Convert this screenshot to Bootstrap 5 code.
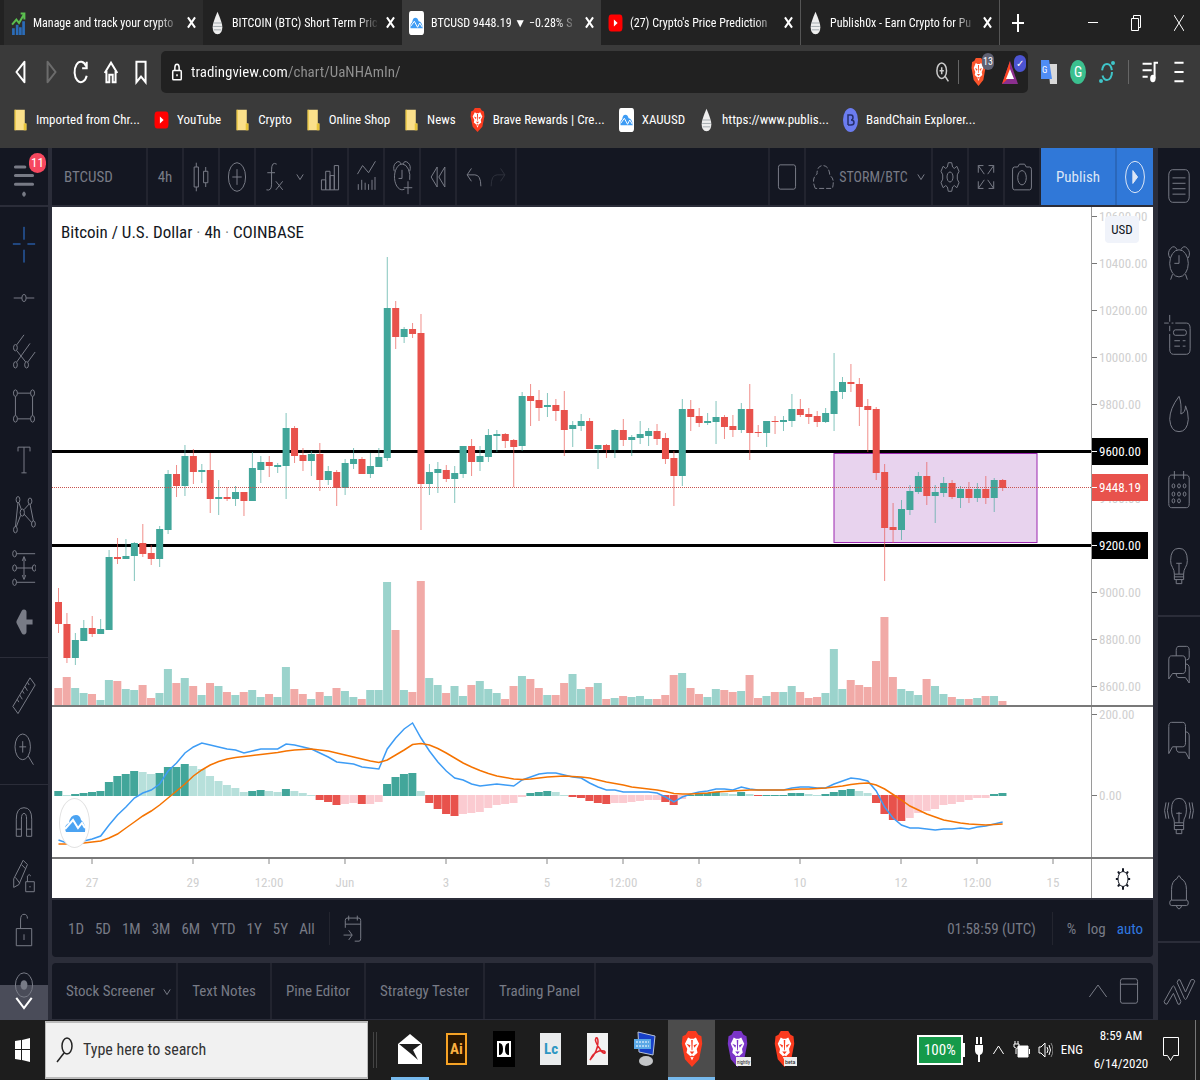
<!DOCTYPE html>
<html lang="en">

<head>
    <meta charset="UTF-8">
    <title>BTCUSD 9448.19 ▼ −0.28% STORM/BTC</title>
    <meta name="viewport" content="width=device-width, initial-scale=1">

    <!-- Bootstrap CSS -->
    <link href="https://cdn.jsdelivr.net/npm/bootstrap@5.3.3/dist/css/bootstrap.min.css" rel="stylesheet">

    <style>
        :root {
            --panel: #141722;
            --gap: #2b2d39;
            --dim: #787b86;
            --chrome: #3a3a3a;
            --ui: "Roboto Condensed", "Liberation Sans Narrow", "Liberation Sans", sans-serif;
        }

        body {
            font-family: var(--ui);
            font-size: 15px;
            line-height: 20px;
            background: var(--gap);
            color: #fff;
            overflow-x: hidden;
        }

        button, input { font-family: var(--ui); }
        button { background: none; border: 0; padding: 0; color: inherit; white-space: nowrap; }
        a { color: inherit; text-decoration: none; white-space: nowrap; }
        svg { display: block; flex: none; }
        symbol * { vector-effect: non-scaling-stroke; }

        /* icons */
        .ic { width: 24px; height: 40px; fill: none; stroke: currentColor; stroke-width: 1; }
        .ic-fav { width: 15px; height: 24px; }
        .ic-nav { width: 16px; height: 26px; stroke-width: 2; }
        .ic-sm { width: 10px; height: 12px; }
        .ic-x { width: 9px; height: 13px; stroke-width: 2; }
        .ic-task { width: 22px; height: 36px; }
        .flip { transform: scaleX(-1); }

        /* browser window */
        .tabstrip { height: 45px; background: #222; padding-left: 4px; font-size: 12px; }
        .tab-item { flex: 0 1 199px; min-width: 0; padding: 0 7px; gap: 7px; }
        .tab-item.first { background: #2c2c2c; }
        .tab-item.active { background: var(--chrome); }
        .tab-item.ruled { border-left: 1px solid #555; }
        .tab-item.new-tab { flex-basis: 36px; padding: 0; }
        .tab-name { flex: 1; min-width: 0; overflow: hidden; text-align: left; -webkit-mask-image: linear-gradient(90deg, #000 85%, transparent); }
        .win-btn { width: 43px; }
        .toolbar-row { background: var(--chrome); padding: 6px 13px; }
        .nav-group { gap: 14px; padding-right: 12px; }
        .address { background: #212121; border-radius: 5px; height: 42px; padding: 0 6px 0 10px; }
        .address input {
            font-size: 15px; background: linear-gradient(90deg, #fff 98px, #929292 98px);
            -webkit-background-clip: text; background-clip: text; -webkit-text-fill-color: transparent;
            border: 0; outline: 0; padding: 0; color: #fff;
        }
        .ext-group { gap: 13px; padding-left: 13px; }
        .rule { width: 1px; height: 24px; background: #666; }
        .bookmarks { background: var(--chrome); height: 49px; padding: 4px 13px 12px; gap: 14px; font-size: 13px; }
        .count { top: -5px; right: -8px; font-size: 10px; line-height: 17px; width: 12px; border-radius: 8px; text-align: center; background: #5f6173; }
        .count.ok { background: #4c54d2; }

        /* trading view */
        .workspace { flex: 1; color: var(--dim); }
        .left-rail { width: 48px; background: var(--panel); overflow: hidden; }
        .left-rail button { height: 54px; }
        .left-rail .menu-btn { height: 57px; border-bottom: 2px solid var(--gap); box-sizing: content-box; }
        .rail-group { padding: 10px 0 8px; border-bottom: 1px solid var(--gap); }
        .rail-group.last { border: 0; padding-bottom: 0; }
        .left-rail .cross-btn { color: #2f78dc; }
        .left-rail .scroll-more { bottom: 0; height: 35px; background: #4a4c59; color: #fff; }
        .eye-icon { bottom: 18px; height: 34px; }
        .alert-count { top: 5px; left: 29px; width: 17px; height: 20px; line-height: 20px; border-radius: 10px; background: #f7485f; color: #fff; font-size: 13px; text-align: center; }
        .right-rail { width: 42px; background: var(--panel); }
        .right-rail button { height: 76px; }
        .right-rail .ic { height: 38px; width: 26px; }
        .right-rail .last-btn { flex: 1; height: auto; padding-top: 20px; }
        .side-group { border-bottom: 2px solid var(--gap); padding-bottom: 11px; }
        .side-group + .side-group { padding-top: 9px; }
        .main-col { padding: 0 5px 0 4px; min-width: 0; }
        .chart-bar { height: 57px; background: var(--panel); margin-bottom: 2px; }
        .chart-bar > button { border-right: 2px solid #22242f; width: 36px; display: flex; align-items: center; justify-content: center; }
        .chart-bar > .first-right { border-left: 2px solid #22242f; width: 38px; }
        .chart-bar > .w-symbol { width: 96px; justify-content: start; padding-left: 12px; }
        .chart-bar > .w-wide { width: 57px; }
        .chart-bar > .w-layout { width: 127px; font-size: 14px; }
        .chart-bar > .w-undo { width: 60px; }
        .chart-bar > .publish { background: #3078d8; color: #dce6f6; width: 76px; border-color: #2a67ba; }
        .chart-bar > .publish-go { background: #3078d8; color: #dce6f6; border: 0; }

        .chart-area { flex: 1; background: #fff; color: #131722; }
        .chart-row { display: grid; grid-template-columns: 1fr 62px; }
        .chart-row > svg, .chart-row > div > svg { width: 100%; height: 100%; position: relative; }
        .pane-price { height: 498px; flex: 498 1 auto; }
        .pane-macd { height: 152px; flex: 152 1 auto; border-top: 2px solid #787878; }
        .pane-time { height: 41px; border-top: 2px solid #787878; }
        .scale { border-left: 1px solid #9a9a9a; overflow: hidden; }
        .scale text, .time-scale text { font-size: 13px; fill: #d0d0d0; }
        .time-scale text { text-anchor: middle; }
        .scale .tag-text { fill: #fff; }
        .scale .ic { width: 20px; height: 30px; }
        .legend-title { left: 9px; top: 12px; font-size: 17px; line-height: 26px; white-space: nowrap; }
        .currency { right: 14px; top: 9px; width: 34px; line-height: 27px; background: #f0f3fa; border-radius: 4px; font-size: 13px; }
        .tv-logo { left: 7px; bottom: 9px; width: 31px; height: 50px; border-radius: 50%; border: 1px solid #e2e2e2; background: #fff; }

        .range-bar { height: 57px; margin-top: 2px; margin-bottom: 6px; background: var(--panel); border-radius: 0 0 4px 4px; padding: 0 10px 0 16px; gap: 11px; }
        .range-bar .rule { height: 33px; background: #23252f; margin: 0 3px; }
        .range-bar .ic { height: 34px; margin-left: -3px; }
        .range-bar .utc-btn { margin-right: 2px; }
        .range-bar .auto-btn { color: #3079e0; }
        .panel-tabs { height: 56px; margin-bottom: 1px; background: var(--panel); border-radius: 4px 4px 0 0; }
        .panel-tabs > button { padding: 0 14px; border-right: 2px solid #22242f; }
        .panel-tabs .tall { height: 38px; }
        .panel-tabs .wide { width: 22px; height: 24px; }

        /* taskbar */
        .taskbar { height: 60px; background: #1d1d1d; font-size: 13px; }
        .start-btn { width: 45px; }
        .search-box { width: 323px; height: 58px; background: #f1f1f1; border: 1px solid #bbb; border-width: 2px 1px; padding-left: 10px; gap: 9px; }
        .search-box input { background: none; border: 0; outline: 0; font-size: 16px; padding: 0; color: #222; min-width: 0; }
        .search-box input::placeholder { color: #333; opacity: 1; }
        .task-btn { width: 47px; height: 60px; border-bottom: 3px solid transparent; }
        .task-btn.open { background: linear-gradient(#76b9ed, #76b9ed) center 57px / 38px 3px no-repeat; }
        .task-btn.current { background: #4c4c4c; border-bottom-color: #76b9ed; }
        .battery { background: #159a4a; border: 2px solid #fff; width: 46px; line-height: 26px; font-size: 15px; text-align: center; }
        .tray { gap: 8px; }
        .tray .ic { width: 13px; height: 16px; }
        .clock { line-height: 28px; width: 60px; text-align: center; }
        .tray-end { width: 5px; border-left: 1px solid #777; height: 60px; }
    </style>
</head>

<body class="d-flex flex-column min-vh-100 m-0">

    <!-- Icon sprite -->
    <svg width="0" height="0" class="position-absolute" aria-hidden="true">
        <symbol id="logo" viewBox="0 0 28 28" preserveAspectRatio="none"><rect width="28" height="28" rx="4" fill="#fff" stroke="none"/><path d="M3 20q-2-4 3-7 1-5 6-5 4 0 6 4 6 0 8 8z" fill="#3e9cf4" stroke="none"/><path d="M3 18l7-6 6 7 4-5 5 5" stroke="#fff" stroke-width="1" fill="none"/></symbol>
        <symbol id="drop" viewBox="0 0 28 28" preserveAspectRatio="none"><path d="M14 1q9 13 9 18 0 8-9 8t-9-8q0-5 9-18z" fill="#eee" stroke="none"/><path d="M7 14h14M6 18h16M7 22h14" stroke="#a4abb0" fill="none"/></symbol>
        <symbol id="tube" viewBox="0 0 28 28" preserveAspectRatio="none"><rect x="1" y="4" width="26" height="20" rx="5" fill="#f00" stroke="none"/><path d="M11 10l7 4-7 4z" fill="#fff" stroke="none"/></symbol>
        <symbol id="folder" viewBox="0 0 28 28" preserveAspectRatio="none"><path d="M3 2h19v16h3v8H3z" fill="#fbe08a" stroke="none"/><path d="M3 2h2v24H3zM20 26v-8l5 0v8z" fill="#e6c338" stroke="none"/></symbol>
        <symbol id="lion" viewBox="0 0 28 28" preserveAspectRatio="none"><path d="M9 0h10l3 3 4 1 1 6-4 12-9 6-9-6L1 10 2 4l4-1z" stroke="none"/><path d="M9 5l3 1h4l3-1 4 5-3 4 1 3-4 2-3 4-3-4-4-2 1-3-3-4z" fill="#fff" stroke="none"/><path d="M7 10l5 1-1 2zM21 10l-5 1 1 2zM13 7h2l-.500 8h-1zM11 16h6l-3 2zM10 20l4-1 4 1-4 .500z" stroke="none"/></symbol>
        <symbol id="growth" viewBox="0 0 28 28" preserveAspectRatio="none"><path d="M2 20h5v8H2zM9 16h5v12H9zM15 19h5v9h-5zM21 12h5v16h-5z" fill="#2b6cb8" stroke="none"/><path d="M2 16l8-6 5 4L24 4M18 3h7v7" stroke="#5bbf4f" stroke-width="2" fill="none"/></symbol>
        <symbol id="close" viewBox="0 0 28 28" preserveAspectRatio="none"><path d="M3 3l22 22M25 3L3 25"/></symbol>
        <symbol id="chev" viewBox="0 0 28 28" preserveAspectRatio="none"><path d="M5 8l9 12 9-12"/></symbol>
        <symbol id="chevup" viewBox="0 0 28 28" preserveAspectRatio="none"><path d="M3 21L14 7l11 14"/></symbol>
        <symbol id="back" viewBox="0 0 28 28" preserveAspectRatio="none"><path d="M20 3v22L6 14z" stroke-linejoin="round"/></symbol>
        <symbol id="reload" viewBox="0 0 28 28" preserveAspectRatio="none"><path d="M23 8A11 11 0 1 0 24 18M24 3v7h-8"/></symbol>
        <symbol id="home" viewBox="0 0 28 28" preserveAspectRatio="none"><path d="M3 15L14 4l11 11M6 13v12h5v-8h6v8h5V13"/></symbol>
        <symbol id="mark" viewBox="0 0 28 28" preserveAspectRatio="none"><path d="M6 3h16v22l-8-6-8 6z"/></symbol>
        <symbol id="lock" viewBox="0 0 28 28" preserveAspectRatio="none"><rect x="4" y="12" width="20" height="13" rx="2"/><path d="M9 12V8q0-5 5-5t5 5v4M14 17v3"/></symbol>
        <symbol id="zoomin" viewBox="0 0 28 28" preserveAspectRatio="none"><circle cx="12.500" cy="12.500" r="9"/><path d="M8.500 12.500h8M12.500 8.500v8M19 19l6 6"/></symbol>
        <symbol id="music" viewBox="0 0 28 28" preserveAspectRatio="none"><path d="M1 5h16M1 12h16M1 19h9M22 21V4h6"/><ellipse cx="19" cy="21" rx="3" ry="3" fill="currentColor"/></symbol>
        <symbol id="lines" viewBox="0 0 28 28" preserveAspectRatio="none"><path d="M6 4h16M6 14h16M6 24h16"/></symbol>

        <symbol id="candles" viewBox="0 0 28 28" preserveAspectRatio="none"><path d="M6 7h5v14H6zM8.500 4v3M8.500 21v3M17 10h5v8h-5zM19.500 7v3M19.500 18v3"/></symbol>
        <symbol id="plusring" viewBox="0 0 28 28" preserveAspectRatio="none"><circle cx="14" cy="14" r="10"/><path d="M14 8.500v11M8.500 14h11"/></symbol>
        <symbol id="fx" viewBox="0 0 28 28" preserveAspectRatio="none"><path d="M16 5q-6-2-6 4v10q0 5-6 4M5 11h9M15 17l8 6M23 17l-8 6"/></symbol>
        <symbol id="bars" viewBox="0 0 28 28" preserveAspectRatio="none"><path d="M4 16h5v7H4zM9 10h5v13H9zM14 13h5v10h-5zM19 6h5v17h-5z"/></symbol>
        <symbol id="indic" viewBox="0 0 28 28" preserveAspectRatio="none"><path d="M4 12l6-6 7 5 8-8M5 23v-4M9 23v-7M13 23v-5M17 23v-4M21 23v-7M24.500 23V14"/></symbol>
        <symbol id="alarm" viewBox="0 0 28 28" preserveAspectRatio="none"><circle cx="14" cy="15" r="10"/><path d="M4 11q-3-4 1-7t7 1M24 11q3-4-1-7t-7 1M14 9v6H9M7 23l-2 4M21 23l2 4"/></symbol>
        <symbol id="alarmadd" viewBox="0 0 28 28" preserveAspectRatio="none"><path d="M17 22.500A9 9 0 1 1 23 16M5 10q-2-4 2-6t6 1M23 10q2-4-2-6t-6 1M14 9v6h-4M21 17v9M16 21.500h10"/></symbol>
        <symbol id="rewind" viewBox="0 0 28 28" preserveAspectRatio="none"><path d="M13 7v14L6 14zM22 7v14L15 14z"/></symbol>
        <symbol id="undo" viewBox="0 0 28 28" preserveAspectRatio="none"><path d="M11 8l-5 4.500 5 4.500M6 12.500h9q7 0 7 8"/></symbol>
        <symbol id="square" viewBox="0 0 28 28" preserveAspectRatio="none"><rect x="4" y="5.500" width="20" height="17" rx="2"/></symbol>
        <symbol id="cloud" viewBox="0 0 28 28" preserveAspectRatio="none"><path d="M5 22q-5-7 2-10 0-6 7-6t8 7q6 2 3 9z" stroke-dasharray="5 2"/></symbol>
        <symbol id="gear" viewBox="0 0 28 28" preserveAspectRatio="none"><path d="M12 4h4l1 3 2 1 3-1.500 2.500 3.500-2 2.500v3l2 2.500-2.500 3.500-3-1.500-2 1-1 3h-4l-1-3-2-1L6 21.500 3.500 18l2-2.500v-3l-2-2.500L6 6.500 9 8l2-1z"/><circle cx="14" cy="14" r="3.500"/></symbol>
        <symbol id="expand" viewBox="0 0 28 28" preserveAspectRatio="none"><path d="M5 11V6h6M5 6l7 6M23 11V6h-6M23 6l-7 6M5 17v5h6M5 22l7-6M23 17v5h-6M23 22l-7-6"/></symbol>
        <symbol id="camera" viewBox="0 0 28 28" preserveAspectRatio="none"><path d="M3 9q0-2 2-2h4l2-2h6l2 2h4q2 0 2 2v12q0 2-2 2H5q-2 0-2-2z"/><circle cx="14" cy="14.500" r="5"/></symbol>
        <symbol id="play" viewBox="0 0 28 28" preserveAspectRatio="none"><circle cx="14" cy="14" r="11"/><path d="M11.500 9.500v9L17 14z" fill="currentColor"/></symbol>

        <symbol id="menu" viewBox="0 0 28 28" preserveAspectRatio="none"><path d="M4 7h11M4 13h20M4 19h20" stroke-width="3" stroke-linecap="round"/><circle cx="14" cy="26" r="1.500" fill="currentColor"/></symbol>
        <symbol id="cross" viewBox="0 0 28 28" preserveAspectRatio="none"><path d="M14 2v9M14 18v9M1 14h9M18 14h9"/></symbol>
        <symbol id="trend" viewBox="0 0 28 28" preserveAspectRatio="none"><circle cx="14" cy="14" r="2.500"/><path d="M2 14h9.500M16.500 14H26"/></symbol>
        <symbol id="fork" viewBox="0 0 28 28" preserveAspectRatio="none"><circle cx="4" cy="11" r="2.200"/><circle cx="4" cy="23" r="2.200"/><circle cx="17" cy="23" r="2.200"/><path d="M5.500 9L14 2M5.500 21L21 8M18.500 21L27 14M5.500 13L16 21"/></symbol>
        <symbol id="rectool" viewBox="0 0 28 28" preserveAspectRatio="none"><circle cx="4" cy="5" r="2.300"/><circle cx="24" cy="5" r="2.300"/><circle cx="4" cy="23" r="2.300"/><circle cx="24" cy="23" r="2.300"/><path d="M6.500 5h15M6.500 23h15M4 7.500v13M24 7.500v13"/></symbol>
        <symbol id="texttool" viewBox="0 0 28 28" preserveAspectRatio="none"><path d="M7 8V5h14v3M14 5v18M11 23h6"/></symbol>
        <symbol id="pattern" viewBox="0 0 28 28" preserveAspectRatio="none"><circle cx="7" cy="4" r="2.200"/><circle cx="21" cy="5" r="2.200"/><circle cx="12" cy="13" r="2.500"/><circle cx="4" cy="25" r="2.200"/><circle cx="25" cy="21" r="2.200"/><path d="M7 6L4 23M8 6l3 5M21 7l4 12M20 7l-6 4M10 15l-5 8M14 14l9 6"/></symbol>
        <symbol id="measure" viewBox="0 0 28 28" preserveAspectRatio="none"><circle cx="3" cy="4" r="2.200"/><circle cx="3" cy="14" r="2.200"/><circle cx="26" cy="14" r="2.200"/><circle cx="3" cy="24" r="2.200"/><path d="M5 4h22M5 24h22M5 14h19M14 7v13M12 9l2-3 2 3M12 19l2 3 2-3"/></symbol>
        <symbol id="arrow" viewBox="0 0 28 28" preserveAspectRatio="none"><path d="M14 7L8 14l6 7zM8 14h16" stroke-width="5" stroke-linejoin="round"/></symbol>
        <symbol id="ruler" viewBox="0 0 28 28" preserveAspectRatio="none"><path d="M21 2l6 5L7 27l-6-5zM18 5l2 2M15 8l3 3M12 11l2 2M9 14l3 3M6 17l2 2"/></symbol>
        <symbol id="magnet" viewBox="0 0 28 28" preserveAspectRatio="none"><path d="M5 24V12q0-8 9-8t9 8v12h-6V12q0-4-3-4t-3 4v12zM5 19h6M17 19h6"/></symbol>
        <symbol id="pencil" viewBox="0 0 28 28" preserveAspectRatio="none"><path d="M2 16L13 3l5 3L8 20l-6 2zM4 15l5 4M11 6l5 3M16 18h10v7H16zM18 18v-4q2-2 4 0M21 21v1"/></symbol>
        <symbol id="unlock" viewBox="0 0 28 28" preserveAspectRatio="none"><path d="M5 13h18v12H5zM10 13V7q0-4 4-4t4 3M14 17v4"/></symbol>
        <symbol id="eye" viewBox="0 0 28 28" preserveAspectRatio="none"><circle cx="14" cy="14" r="10"/><circle cx="14" cy="14" r="4" fill="currentColor" stroke="none"/></symbol>

        <symbol id="list" viewBox="0 0 28 28" preserveAspectRatio="none"><rect x="3" y="2" width="22" height="24" rx="4"/><path d="M7 8h14M7 12h14M7 16h14M7 20h14"/></symbol>
        <symbol id="datawin" viewBox="0 0 28 28" preserveAspectRatio="none" overflow="visible"><path d="M10 3h12q4 0 4 4v15q0 4-4 4H8q-4 0-4-4V11M4-3v5M4 5v4M-2 3h5M6 3h2"/><rect x="8" y="8" width="14" height="4" rx="2"/><path d="M9 16h6M18 16h3M9 20h6M18 20h3"/></symbol>
        <symbol id="flame" viewBox="0 0 28 28" preserveAspectRatio="none"><path d="M14 1Q4 10 4 18q1 9 10 9t10-9q0-6-3-10 0 5-5 6 1-8-2-13z"/></symbol>
        <symbol id="calendar" viewBox="0 0 28 28" preserveAspectRatio="none"><rect x="3" y="3" width="22" height="24" rx="3"/><path d="M9 0v6M19 0v6"/><g><circle cx="8" cy="11" r="1.500"/><circle cx="14" cy="11" r="1.500"/><circle cx="20" cy="11" r="1.500"/><circle cx="8" cy="17" r="1.500"/><circle cx="14" cy="17" r="1.500"/><circle cx="20" cy="17" r="1.500"/><circle cx="8" cy="22" r="1.500"/><circle cx="14" cy="22" r="1.500"/></g></symbol>
        <symbol id="bulb" viewBox="0 0 28 28" preserveAspectRatio="none"><path d="M9 20q0-3-2-5-2-2-2-5 0-9 9-9t9 9q0 3-2 5-2 2-2 5zM14 20v-8M11 12h6M9 20v4h10v-4M11 24v3h6v-3M9 22h10"/></symbol>
        <symbol id="stream" viewBox="0 0 28 28" preserveAspectRatio="none" overflow="visible"><path d="M9 19q0-3-2-5-1-2-1-5 0-8 8-8t8 8q0 3-1 5-2 2-2 5zM14 19v-8M11 12h6M9 19v5h10v-5M11 24v3h6v-3M9 21h10M3 4q-3 6 0 12M0 4q-3 6 0 12M25 4q3 6 0 12M28 4q3 6 0 12"/></symbol>
        <symbol id="chats" viewBox="0 0 28 28" preserveAspectRatio="none"><path d="M3 25V11q0-3 3-3h12q3 0 3 3v7q0 3-3 3H7zM11 8V4q0-3 3-3h8q3 0 3 3v5q0 2-3 2M21 14q4 0 4 3v11l-4-4h-7q-3 0-3-3"/></symbol>
        <symbol id="chat" viewBox="0 0 28 28" preserveAspectRatio="none"><path d="M3 24V4q0-3 3-3h12q3 0 3 3v12q0 3-3 3H7zM21 8q4 0 4 3v17l-4-5h-7q-3 0-3-4"/></symbol>
        <symbol id="bell" viewBox="0 0 28 28" preserveAspectRatio="none"><path d="M6 20v-8q0-6 6-8 2-4 4 0 6 2 6 8v8M11 24q3 5 6 0"/><rect x="4" y="20" width="20" height="4" rx="2"/></symbol>
        <symbol id="zigzag" viewBox="0 0 28 28" preserveAspectRatio="none" overflow="visible"><path d="M-2 21L7 10q1-1 2 0l7 11q-1 3-3 2L8 15l-7 8q-3 0-3-2zM12 7q1-3 3-2l6 9 6-9q3-1 4 1l-9 13q-1 1-2 0z"/></symbol>
        <symbol id="goto" viewBox="0 0 28 28" preserveAspectRatio="none"><path d="M5 13V7q0-2 2-2h14q2 0 2 2v15q0 2-2 2h-5M5 10h18M9 3v4M19 3v4M3 19h10M9 15l4 4-4 4"/></symbol>
        <symbol id="window" viewBox="0 0 28 28" preserveAspectRatio="none"><rect x="4" y="5" width="20" height="18" rx="2"/><path d="M4 9h20"/></symbol>
        <symbol id="sun" viewBox="0 0 28 28" preserveAspectRatio="none"><circle cx="14" cy="14" r="7"/><path d="M14 4v3M14 21v3M4 14h3M21 14h3M7 7l2 2M19 19l2 2M7 21l2-2M19 9l2-2" stroke-width="2"/></symbol>
    </svg>

    <!-- Browser tabs -->
    <header>
        <div class="tabstrip d-flex align-items-stretch">
            <button class="tab-item first d-flex align-items-center"><svg class="ic-fav"><use href="#growth"/></svg><span class="tab-name">Manage and track your crypto</span><svg class="ic ic-x"><use href="#close"/></svg></button>
            <button class="tab-item d-flex align-items-center"><svg class="ic-fav"><use href="#drop"/></svg><span class="tab-name">BITCOIN (BTC) Short Term Pric</span><svg class="ic ic-x"><use href="#close"/></svg></button>
            <button class="tab-item active d-flex align-items-center"><svg class="ic-fav"><use href="#logo"/></svg><span class="tab-name">BTCUSD 9448.19 ▼ −0.28% S</span><svg class="ic ic-x"><use href="#close"/></svg></button>
            <button class="tab-item d-flex align-items-center"><svg class="ic-fav"><use href="#tube"/></svg><span class="tab-name">(27) Crypto's Price Prediction</span><svg class="ic ic-x"><use href="#close"/></svg></button>
            <button class="tab-item ruled d-flex align-items-center"><svg class="ic-fav"><use href="#drop"/></svg><span class="tab-name">Publish0x - Earn Crypto for Pu</span><svg class="ic ic-x"><use href="#close"/></svg></button>
            <button class="tab-item ruled new-tab" aria-label="New tab"><svg class="mx-auto" width="12" height="18" stroke="#fff" stroke-width="2"><path d="M6 0v18M0 9h12"/></svg></button>
            <div class="ms-auto d-flex">
                <button class="win-btn" aria-label="Minimize"><svg class="mx-auto" width="10" height="16" stroke="#fff"><path d="M0 7.500h10"/></svg></button>
                <button class="win-btn" aria-label="Restore"><svg class="mx-auto" width="10" height="16" stroke="#fff" fill="none"><path d="M.5 3.500h7v12h-7zM2.500 3.500v-3h7v12h-2"/></svg></button>
                <button class="win-btn" aria-label="Close"><svg class="mx-auto" width="10" height="16" stroke="#fff"><path d="M0 0l10 16M10 0L0 16"/></svg></button>
            </div>
        </div>

        <!-- Address bar -->
        <div class="toolbar-row d-flex align-items-center">
            <div class="nav-group d-flex">
                <button aria-label="Back"><svg class="ic ic-nav"><use href="#back"/></svg></button>
                <button aria-label="Forward" class="opacity-25"><svg class="ic ic-nav flip"><use href="#back"/></svg></button>
                <button aria-label="Reload"><svg class="ic ic-nav"><use href="#reload"/></svg></button>
                <button aria-label="Home"><svg class="ic ic-nav"><use href="#home"/></svg></button>
                <button aria-label="Bookmark"><svg class="ic ic-nav"><use href="#mark"/></svg></button>
            </div>
            <div class="address flex-grow-1 d-flex align-items-center gap-2">
                <svg width="12" height="20" fill="none" stroke="#fff" stroke-width="1.500"><use href="#lock"/></svg>
                <input class="flex-grow-1" type="text" aria-label="Address" value="tradingview.com/chart/UaNHAmIn/">
                <svg width="15" height="24" fill="none" stroke="#ccc" stroke-width="1.500"><use href="#zoomin"/></svg>
                <div class="rule"></div>
                <button class="position-relative ms-1" aria-label="Shields"><svg width="15" height="28" fill="#fb542b"><use href="#lion"/></svg><span class="count position-absolute">13</span></button>
                <button class="position-relative ms-2 me-1" aria-label="Rewards"><svg width="16" height="24"><path d="M8 1L0 24h16z" fill="#8b2f8f"/><path d="M8 1L0 24l8-7z" fill="#ff4724"/><path d="M8 9l-4 10h8z" fill="#fff"/></svg><span class="count ok position-absolute">✓</span></button>
            </div>
            <div class="ext-group d-flex align-items-center">
                <svg width="16" height="24"><path d="M7 4h9v20H9z" fill="#d8d8d8"/><path d="M0 0h8l3 19H0z" fill="#4f8df5"/><text x="1" y="13" font-size="9" fill="#fff">G</text></svg>
                <svg width="16" height="24"><ellipse cx="8" cy="12" rx="8" ry="12" fill="#3bc08f"/><text x="4" y="17" font-size="14" fill="#fff">G</text></svg>
                <svg width="16" height="24" fill="none" stroke="#3fc4c8" stroke-width="2"><ellipse cx="8" cy="12" rx="5" ry="8" stroke-dasharray="17 5"/><circle cx="14" cy="3" r="1"/><circle cx="2" cy="21" r="1"/></svg>
                <div class="rule"></div>
                <svg class="ic ic-nav"><use href="#music"/></svg>
                <svg class="ic ic-nav"><use href="#lines"/></svg>
            </div>
        </div>

        <!-- Bookmarks -->
        <nav class="bookmarks d-flex align-items-center">
            <a href="#" class="d-flex align-items-center gap-2"><svg class="ic-fav"><use href="#folder"/></svg>Imported from Chr...</a>
            <a href="#" class="d-flex align-items-center gap-2"><svg class="ic-fav"><use href="#tube"/></svg>YouTube</a>
            <a href="#" class="d-flex align-items-center gap-2"><svg class="ic-fav"><use href="#folder"/></svg>Crypto</a>
            <a href="#" class="d-flex align-items-center gap-2"><svg class="ic-fav"><use href="#folder"/></svg>Online Shop</a>
            <a href="#" class="d-flex align-items-center gap-2"><svg class="ic-fav"><use href="#folder"/></svg>News</a>
            <a href="#" class="d-flex align-items-center gap-2"><svg class="ic-fav" fill="#fb3b1e"><use href="#lion"/></svg>Brave Rewards | Cre...</a>
            <a href="#" class="d-flex align-items-center gap-2"><svg class="ic-fav"><use href="#logo"/></svg>XAUUSD</a>
            <a href="#" class="d-flex align-items-center gap-2"><svg class="ic-fav"><use href="#drop"/></svg>https://www.publis...</a>
            <a href="#" class="d-flex align-items-center gap-2"><svg width="15" height="24"><ellipse cx="7.500" cy="12" rx="7.500" ry="12" fill="#6b7cf0"/><path d="M5 17V7h3q2 0 2 2.500T8 12q3 0 3 2.500T8 17H5" fill="none" stroke="#26306e" stroke-width="1.500"/></svg>BandChain Explorer...</a>
        </nav>
    </header>

    <main class="workspace d-flex">
        <!-- Drawing tools -->
        <aside class="left-rail position-relative d-flex flex-column flex-shrink-0">
            <button class="menu-btn d-flex justify-content-center align-items-center position-relative" aria-label="Menu"><svg class="ic"><use href="#menu"/></svg><span class="alert-count position-absolute">11</span></button>
            <div class="rail-group d-flex flex-column align-items-center">
                <button class="cross-btn" aria-label="Cross"><svg class="ic"><use href="#cross"/></svg></button>
                <button aria-label="Trend line"><svg class="ic"><use href="#trend"/></svg></button>
                <button aria-label="Pitchfork"><svg class="ic"><use href="#fork"/></svg></button>
                <button aria-label="Rectangle"><svg class="ic"><use href="#rectool"/></svg></button>
                <button aria-label="Text"><svg class="ic"><use href="#texttool"/></svg></button>
                <button aria-label="Pattern"><svg class="ic"><use href="#pattern"/></svg></button>
                <button aria-label="Position"><svg class="ic"><use href="#measure"/></svg></button>
                <button aria-label="Arrow"><svg class="ic"><use href="#arrow"/></svg></button>
            </div>
            <div class="rail-group d-flex flex-column align-items-center">
                <button aria-label="Measure"><svg class="ic"><use href="#ruler"/></svg></button>
                <button aria-label="Zoom in"><svg class="ic"><use href="#zoomin"/></svg></button>
            </div>
            <div class="rail-group last d-flex flex-column align-items-center">
                <button aria-label="Magnet"><svg class="ic"><use href="#magnet"/></svg></button>
                <button aria-label="Stay in drawing mode"><svg class="ic"><use href="#pencil"/></svg></button>
                <button aria-label="Lock"><svg class="ic"><use href="#unlock"/></svg></button>
            </div>
            <button class="scroll-more position-absolute w-100 d-flex justify-content-center align-items-center" aria-label="More tools"><svg width="24" height="24" fill="none" stroke="#fff" stroke-width="2"><use href="#chev"/></svg></button>
            <svg class="ic eye-icon position-absolute start-50 translate-middle-x"><use href="#eye"/></svg>
        </aside>

        <section class="main-col flex-grow-1 d-flex flex-column">
            <!-- Chart toolbar -->
            <div class="chart-bar d-flex">
                <button class="w-symbol">BTCUSD</button>
                <button>4h</button>
                <button aria-label="Candles"><svg class="ic"><use href="#candles"/></svg></button>
                <button aria-label="Compare"><svg class="ic"><use href="#plusring"/></svg></button>
                <button class="w-wide gap-2" aria-label="Indicators"><svg class="ic"><use href="#fx"/></svg><svg class="ic ic-sm"><use href="#chev"/></svg></button>
                <button aria-label="Financials"><svg class="ic"><use href="#bars"/></svg></button>
                <button aria-label="Templates"><svg class="ic"><use href="#indic"/></svg></button>
                <button aria-label="Alert"><svg class="ic"><use href="#alarmadd"/></svg></button>
                <button aria-label="Replay"><svg class="ic"><use href="#rewind"/></svg></button>
                <button class="w-undo" aria-label="Undo"><svg class="ic"><use href="#undo"/></svg><svg class="ic opacity-25 flip"><use href="#undo"/></svg></button>
                <button class="first-right ms-auto" aria-label="Layout"><svg class="ic"><use href="#square"/></svg></button>
                <button class="w-layout gap-1"><svg class="ic"><use href="#cloud"/></svg>STORM/BTC<svg class="ic ic-sm ms-1"><use href="#chev"/></svg></button>
                <button aria-label="Settings"><svg class="ic"><use href="#gear"/></svg></button>
                <button aria-label="Fullscreen"><svg class="ic"><use href="#expand"/></svg></button>
                <button aria-label="Snapshot"><svg class="ic"><use href="#camera"/></svg></button>
                <button class="publish">Publish</button>
                <button class="publish-go" aria-label="Start streaming"><svg class="ic"><use href="#play"/></svg></button>
            </div>

            <!-- Chart -->
            <div class="chart-area d-flex flex-column position-relative">
                <div class="chart-row pane-price">
                    <svg id="pricePane" viewBox="52 207 1039 498" preserveAspectRatio="none"></svg>
                    <div class="scale"><svg id="priceScale"></svg></div>
                </div>
                <div class="chart-row pane-macd position-relative">
                    <svg id="macdPane" viewBox="52 707 1039 150" preserveAspectRatio="none"></svg>
                    <div class="scale"><svg id="macdScale"></svg></div>
                    <a href="#" class="tv-logo position-absolute d-flex align-items-center justify-content-center" aria-label="TradingView"><svg width="22" height="22" viewBox="0 0 22 22"><path d="M2 20q-3-6 3-9 1-8 7-8 4 0 5 5 5 4 4 12z" fill="#4ba3f2"/><path d="M1 17l8-9 5 8 4-5 3 5" fill="none" stroke="#fff" stroke-width="2"/></svg></a>
                </div>
                <div class="chart-row pane-time">
                    <svg id="timeScale" class="time-scale"></svg>
                    <button class="scale d-flex align-items-center justify-content-center" aria-label="Chart settings"><svg class="ic"><use href="#sun"/></svg></button>
                </div>
                <div class="legend-title position-absolute">Bitcoin / U.S. Dollar <span class="text-black-50">·</span> 4h <span class="text-black-50">·</span> COINBASE</div>
                <button class="currency position-absolute">USD</button>
            </div>

            <!-- Date range -->
            <div class="range-bar d-flex align-items-center">
                <button>1D</button>
                <button>5D</button>
                <button>1M</button>
                <button>3M</button>
                <button>6M</button>
                <button>YTD</button>
                <button>1Y</button>
                <button>5Y</button>
                <button>All</button>
                <div class="rule"></div>
                <button aria-label="Go to date"><svg class="ic"><use href="#goto"/></svg></button>
                <button class="utc-btn ms-auto">01:58:59 (UTC)</button>
                <div class="rule"></div>
                <button>%</button>
                <button>log</button>
                <button class="auto-btn">auto</button>
            </div>

            <!-- Bottom panels -->
            <div class="panel-tabs d-flex">
                <button class="pe-1">Stock Screener <svg class="ic ic-sm d-inline-block ms-1"><use href="#chev"/></svg></button>
                <button>Text Notes</button>
                <button>Pine Editor</button>
                <button>Strategy Tester</button>
                <button>Trading Panel</button>
                <div class="ms-auto d-flex align-items-center gap-2 pe-2 me-1">
                    <svg class="ic wide"><use href="#chevup"/></svg>
                    <svg class="ic tall"><use href="#window"/></svg>
                </div>
            </div>
        </section>

        <!-- Widgets -->
        <aside class="right-rail d-flex flex-column flex-shrink-0">
            <div class="side-group d-flex flex-column align-items-center">
                <button aria-label="Watchlist"><svg class="ic"><use href="#list"/></svg></button>
                <button aria-label="Alerts"><svg class="ic"><use href="#alarm"/></svg></button>
                <button aria-label="Data window"><svg class="ic overflow-visible"><use href="#datawin"/></svg></button>
                <button aria-label="Hotlist"><svg class="ic"><use href="#flame"/></svg></button>
                <button aria-label="Calendar"><svg class="ic"><use href="#calendar"/></svg></button>
                <button aria-label="Ideas"><svg class="ic"><use href="#bulb"/></svg></button>
            </div>
            <div class="side-group d-flex flex-column align-items-center">
                <button aria-label="Public chats"><svg class="ic"><use href="#chats"/></svg></button>
                <button aria-label="Private chats"><svg class="ic"><use href="#chat"/></svg></button>
                <button aria-label="Ideas stream"><svg class="ic overflow-visible"><use href="#stream"/></svg></button>
                <button aria-label="Notifications"><svg class="ic"><use href="#bell"/></svg></button>
            </div>
            <button class="last-btn mx-auto" aria-label="Order panel"><svg class="ic overflow-visible"><use href="#zigzag"/></svg></button>
        </aside>
    </main>

    <!-- Windows taskbar -->
    <footer class="taskbar d-flex align-items-center">
        <button class="start-btn" aria-label="Start"><svg class="mx-auto" width="15" height="24" fill="#fff"><path d="M0 3l6-1v9H0zM7 2l8-2v11H7zM0 12h6v10l-6-1zM7 12h8v12l-8-2z"/></svg></button>
        <label class="search-box d-flex align-items-center">
            <svg width="18" height="26" fill="none" stroke="#222" stroke-width="1.500"><ellipse cx="11" cy="9" rx="5" ry="8"/><path d="M8 16L1 25"/></svg>
            <input type="text" placeholder="Type here to search" aria-label="Search">
        </label>
        <svg width="18" height="40" stroke="#444"><path d="M5.500 2v36M8.500 2v36"/></svg>
        <button class="task-btn open" aria-label="Mail"><svg class="mx-auto" width="24" height="30"><path d="M0 10L12 0l12 10v20H0z" fill="#fff"/><path d="M1 10h22l-8 6 5 10-8-7z" fill="#1d1d1d"/></svg></button>
        <button class="task-btn" aria-label="Illustrator"><svg class="mx-auto" width="21" height="32"><rect x="1" y="1" width="19" height="30" fill="#2a1600" stroke="#f7a325" stroke-width="2"/><text x="4" y="21" font-size="15" font-weight="700" fill="#fbb040">Ai</text></svg></button>
        <button class="task-btn" aria-label="Dolby"><svg class="mx-auto" width="22" height="36"><rect width="22" height="36"/><rect x="4" y="10" width="14" height="16" fill="#fff"/><path d="M6 12q4 0 4 6t-4 6zM16 12q-4 0-4 6t4 6z"/></svg></button>
        <button class="task-btn" aria-label="LiveCycle"><svg class="mx-auto" width="21" height="32"><rect width="21" height="32" fill="#eaeced"/><text x="4" y="21" font-size="15" font-weight="700" fill="#2e97c3">Lc</text></svg></button>
        <button class="task-btn" aria-label="Acrobat"><svg class="mx-auto" width="21" height="32"><rect width="21" height="32" fill="#f2f2f2"/><path d="M3 27q8-9 8-18 0-5-2-4-2 3 4 11 3 5 5 4 1-3-6-2-6 2-9 9z" fill="none" stroke="#e0262d" stroke-width="1.500"/></svg></button>
        <button class="task-btn" aria-label="Remote"><svg class="mx-auto" width="24" height="36"><path d="M5 1l17 4-2 19-14-3z" fill="#1740c8" stroke="#b8c4d8"/><path d="M1 8h17v10H1z" fill="#5aa8e6"/><path d="M3 11h13M3 15h13" stroke="#fff" stroke-dasharray="2 1"/><ellipse cx="13" cy="30" rx="7" ry="5" fill="#c4c6c8"/></svg></button>
        <button class="task-btn current" aria-label="Brave"><svg class="ic-task mx-auto" fill="#fb3b1e"><use href="#lion"/></svg></button>
        <button class="task-btn" aria-label="Brave Nightly"><svg class="mx-auto" width="24" height="36" fill="#7a35c8"><use href="#lion" width="21" height="36"/><rect x="9" y="26" width="15" height="9" fill="#eee"/><text x="10" y="33" font-size="5" fill="#222">nightly</text></svg></button>
        <button class="task-btn" aria-label="Brave Beta"><svg class="mx-auto" width="24" height="36" fill="#fb3b1e"><use href="#lion" width="21" height="36"/><rect x="10" y="26" width="13" height="9" fill="#eee"/><text x="11" y="33" font-size="6" fill="#222">beta</text></svg></button>
        <div class="tray ms-auto d-flex align-items-center">
            <div class="d-flex align-items-center"><span class="battery">100%</span><svg width="3" height="14"><path d="M0 0h2v14H0z" fill="#fff"/></svg></div>
            <svg width="10" height="26" fill="#fff"><path d="M1 8h8v5q0 4-3 5v7H4v-7q-3-1-3-5zM2 0h2v7H2zM6 0h2v7H6z"/></svg>
            <svg class="ic"><use href="#chevup"/></svg>
            <svg width="17" height="18" fill="none" stroke="#fff"><path d="M5 5h10v11H5z" fill="#fff"/><path d="M16.500 8v5M1 3h5v3q-2 3-5 0zM2 0v3M5 0v3M3 8v5"/></svg>
            <svg width="15" height="18" fill="none" stroke="#fff"><path d="M1 6h2l4-4v14l-4-4H1zM9 6q2 3 0 6M11 4q3 5 0 10" /><path d="M13 2q4 7 0 14" stroke="#888"/></svg>
            <button>ENG</button>
            <div class="clock">8:59 AM<br>6/14/2020</div>
            <svg class="ms-1" width="16" height="26" fill="none" stroke="#fff"><path d="M.5.500h15v18h-5l-3 5-3-5h-4z"/></svg>
            <div class="tray-end ms-2"></div>
        </div>
    </footer>

    <!-- Bootstrap JS -->
    <script src="https://cdn.jsdelivr.net/npm/bootstrap@5.3.3/dist/js/bootstrap.bundle.min.js"></script>

    <script>
        const UP = '#42a69a', DOWN = '#e8524c';
        const STEP = 8.43, X0 = 58.5;

        /* color, high, body top, body bottom, low */
        const candles = `r588,602,624,633 r613,624,658,663 g633,640,658,665 g620,628,641,641 r616,628,634,637 g619,629,634,634
            g550,557,630,630 r538,557,559,564 g539,556,559,559 g542,543,556,581 r524,543,554,557 r545,553,559,565
            g526,529,559,567 g470,474,530,534 r465,474,486,497 g445,456,486,496 r449,456,472,484 g464,470,472,483
            r453,470,499,513 g480,497,499,515 r487,497,499,501 g486,492,499,506 r492,492,501,516 g452,468,501,501
            g456,462,470,483 r456,462,466,477 g463,465,467,473 g413,428,466,499 r426,428,456,463 r448,455,461,471
            g451,454,461,476 r443,454,480,491 g466,471,480,485 r470,472,488,506 g459,463,488,495 g448,459,464,469
            r457,459,474,474 g453,466,474,478 g448,457,467,467 g257,308,458,461 r301,308,337,349 g327,329,337,343
            r323,329,334,338 r314,333,484,530 g464,472,484,495 g462,469,473,493 r465,470,479,482 g466,473,479,503
            g446,446,474,478 r439,446,462,476 g446,456,462,471 g429,435,457,462 g430,434,436,452 r433,434,441,448
            r439,440,447,487 g392,396,446,451 r384,396,401,426 r390,400,408,421 g393,405,407,417 r399,405,411,421
            r391,410,430,456 g421,425,429,447 g414,421,426,431 r418,421,449,449 g445,445,449,469 r444,445,450,458
            g429,430,450,458 r419,430,440,446 g435,437,440,456 g421,434,438,444 g428,431,436,446 r424,431,439,445
            r433,438,459,464 r451,458,476,506 g399,409,476,486 r400,409,417,431 r408,416,423,427 g413,421,423,425
            g401,417,422,444 r415,417,427,439 r415,426,430,437 g403,409,430,433 r384,409,433,460 r425,432,433,437
            g421,421,433,447 r416,421,422,434 g416,420,422,431 g394,409,421,427 r399,409,415,417 r408,414,417,424
            r411,416,422,427 g408,413,422,423 g353,391,414,431 g377,382,392,399 r364,382,384,392 r378,384,407,426
            r399,406,410,452 r407,409,473,480 r464,472,528,581 r503,527,530,543 g500,509,530,540 g485,491,510,515
            g472,476,492,494 r462,476,496,505 g485,492,496,523 g477,483,493,497 r480,483,497,499 g486,489,498,508
            r482,489,498,503 g483,489,498,502 r476,489,498,504 g478,480,498,512 r479,480,488,491`
            .split(/\s+/).map(c => [c[0], ...c.slice(1).split(',').map(Number)]);

        const volume = [17, 28, 17, 12, 11, 5, 25, 24, 16, 15, 20, 7, 12, 36, 22, 27, 19, 10, 22, 19, 13, 10, 13, 15, 8, 11, 8, 38, 16,
            11, 6, 13, 9, 17, 14, 8, 6, 15, 15, 123, 75, 15, 13, 124, 27, 20, 12, 19, 9, 20, 24, 16, 12, 6, 19, 29, 26, 17, 10, 10,
            22, 31, 16, 18, 22, 6, 7, 9, 8, 9, 6, 6, 10, 30, 32, 17, 11, 8, 16, 15, 13, 14, 30, 7, 9, 13, 13, 19, 13, 7, 8, 12, 56,
            16, 25, 20, 18, 44, 88, 28, 16, 14, 10, 26, 19, 11, 8, 6, 6, 7, 9, 9, 4];

        const histogram = [5, 1, 2, 3, 4, 5, 14, 20, 22, 25, 24, 22, 23, 29, 29, 32, 30, 27, 20, 15, 11, 8, 4, 5, 6, 5, 4, 7, 5, 3, 1,
            -5, -7, -10, -9, -8, -9, -9, -7, 12, 19, 22, 23, 5, -8, -14, -19, -21, -19, -18, -17, -13, -10, -9, -8, -2, 3, 4, 5, 4, 1,
            -2, -3, -6, -8, -9, -8, -8, -7, -6, -5, -5, -7, -10, -4, 1, 3, 3, 4, 3, 2, 4, 2, -1, 1, 1, 1, 3, 3, 2, 1, 2, 4, 6, 7, 5,
            3, -8, -19, -25, -26, -23, -18, -16, -14, -10, -9, -7, -5, -3, -3, 2, 3];

        const macd = [840, 843, 842, 841, 839, 836, 825, 815, 807, 798, 793, 790, 784, 771, 763, 753, 747, 743, 745, 747, 749, 750,
            753, 751, 749, 749, 749, 744, 745, 747, 749, 753, 757, 762, 763, 764, 767, 768, 769, 749, 738, 729, 723, 738, 751, 762,
            771, 778, 780, 784, 786, 785, 784, 785, 786, 780, 777, 774, 773, 773, 775, 777, 778, 783, 787, 790, 790, 792, 792, 792,
            792, 793, 797, 802, 797, 794, 792, 791, 789, 789, 790, 787, 789, 790, 790, 790, 790, 788, 787, 787, 788, 788, 784, 781,
            778, 779, 781, 791, 807, 818, 825, 828, 828, 829, 830, 829, 829, 828, 829, 827, 826, 824, 822];

        const signal = [844, 844, 844, 843, 842, 841, 838, 834, 828, 822, 816, 811, 805, 798, 791, 784, 776, 770, 765, 761.5, 759,
            757.5, 756.5, 755.5, 754.5, 753.5, 752.5, 751, 750, 749.5, 749, 750, 751, 753, 755, 757, 759, 761, 762.5, 760, 755, 750,
            744.5, 743.5, 745, 748.5, 753, 758, 763, 767, 770.5, 773.5, 776, 777.5, 779, 779.5, 779, 778, 777, 776.5, 776, 776.5, 777,
            778, 780, 782, 783.5, 785, 787, 788, 789, 790, 791.5, 793.5, 794, 794, 793.5, 793, 792, 791.5, 791, 790.5, 790, 790, 790,
            790, 790, 789.5, 789, 789, 788.5, 788, 787, 786, 784.5, 783.5, 783, 785, 789, 794.5, 800, 806, 810, 814, 817, 820, 821.5,
            823, 824, 824.5, 825, 824.5, 824];

        const xAt = i => X0 + i * STEP;
        const rect = (x, y, w, h, fill) => `<rect x="${x}" y="${y}" width="${w}" height="${h}" fill="${fill}"/>`;

        /* Price pane: volume, levels, range box, candles */
        let out = '';
        volume.forEach((v, i) => {
            out += rect(xAt(i) - 4.2, 705 - v, 8, v, candles[i][0] === 'g' ? '#9bd3cc' : '#f1aaa7');
        });
        out += rect(52, 450, 1039, 3, '#000') + rect(52, 544, 1039, 3, '#000');
        out += '<rect x="834" y="453.500" width="203" height="89" fill="#e8d3ee" stroke="#9c27b0"/>';
        candles.forEach(([c, hi, top, bottom, lo], i) => {
            const color = c === 'g' ? UP : DOWN;
            out += `<g opacity=".65">${rect(xAt(i) - .5, hi, 1, lo - hi, color)}</g>`;
            out += rect(xAt(i) - 3.5, top, 7, Math.max(bottom - top, 1), color);
        });
        out += `<path d="M52 487.500h1039" stroke="#c9544f" stroke-dasharray="1 1"/>`;
        document.getElementById('pricePane').innerHTML = out;

        /* MACD pane */
        out = '';
        histogram.forEach((v, i) => {
            const prev = i ? histogram[i - 1] : 0;
            const fill = v > 0 ? (v >= prev ? UP : '#b7e0db') : (v < prev ? DOWN : '#fbcbd1');
            out += rect(xAt(i) - 4.2, v > 0 ? 796 - v : 795, 8, Math.abs(v), fill);
        });
        const line = (data, color) => `<polyline points="${data.map((y, i) => xAt(i) + ',' + y).join(' ')}" fill="none" stroke="${color}" stroke-width="1.500"/>`;
        out += line(macd, '#3d9cf5') + line(signal, '#f57300');
        document.getElementById('macdPane').innerHTML = out;

        /* Scales */
        const pct = (y, top, height) => (y - top) / height * 100 + '%';
        const tick = (y, color) => `<line x1="0" x2="5" y1="${y}" y2="${y}" stroke="${color}"/>`;
        const label = (y, text, cls = '') => `<text x="7" y="${y}" dy="5" class="${cls}">${text}</text>`;
        out = '';
        [['10600.00', 216], ['10400.00', 263], ['10200.00', 310], ['10000.00', 357], ['9800.00', 404], ['9400.00', 498],
            ['9000.00', 592], ['8800.00', 639], ['8600.00', 686]].forEach(([text, y]) => {
            out += tick(pct(y + .5, 207, 498), '#777') + label(pct(y, 207, 498), text);
        });
        [['9600.00', 451, '#000'], ['9448.19', 487, DOWN], ['9200.00', 545, '#000']].forEach(([text, y, fill]) => {
            out += `<rect x="0" y="${pct(y - 13, 207, 498)}" width="56" height="27" fill="${fill}"/>`
                + tick(pct(y + .5, 207, 498), '#fff') + label(pct(y, 207, 498), text, 'tag-text');
        });
        document.getElementById('priceScale').innerHTML = out;
        document.getElementById('macdScale').innerHTML = [['200.00', 714], ['0.00', 795]]
            .map(([text, y]) => tick(pct(y + .5, 707, 150), '#777') + label(pct(y, 707, 150), text)).join('');
        document.getElementById('timeScale').innerHTML = [['27', 92], ['29', 193], ['12:00', 269], ['Jun', 345], ['3', 446], ['5', 547],
            ['12:00', 623], ['8', 699], ['10', 800], ['12', 901], ['12:00', 977], ['15', 1053]].map(([text, x]) => {
            const at = pct(x, 52, 1039);
            return `<line x1="${at}" x2="${at}" y1="0" y2="5" stroke="#888"/><text x="${at}" y="28">${text}</text>`;
        }).join('');
    </script>
</body>

</html>
